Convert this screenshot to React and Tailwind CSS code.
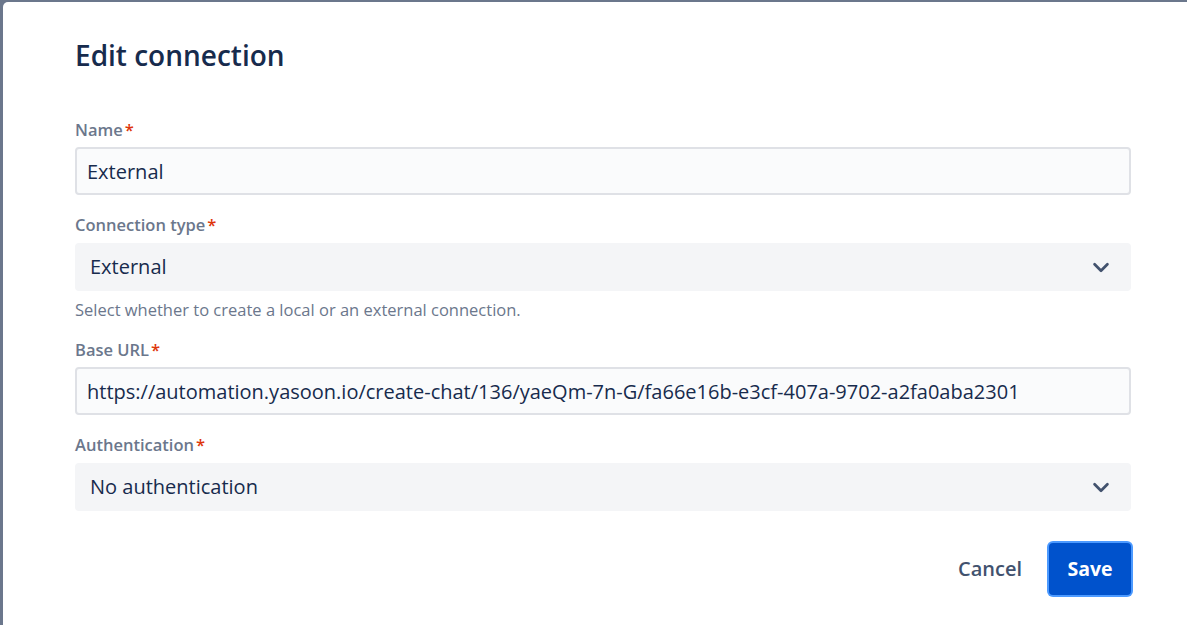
const font = { fontFamily: '"Open Sans", "Noto Sans", sans-serif' };

const Label = ({ children }) => (
  <div className="flex items-center text-[16.5px] font-semibold text-[#6b778c] h-[20px]">
    {children}
    <span className="text-[#de350b] ml-[2px]">*</span>
  </div>
);

const TextInput = ({ value }) => (
  <div className="mt-[7px] h-[48px] border-2 border-[#dfe1e6] bg-[#fafbfc] rounded-[4px] flex items-center px-[10px] pt-[1px] text-[20px] text-[#172b4d] whitespace-nowrap overflow-hidden">
    {value}
  </div>
);

const Select = ({ value }) => (
  <div className="mt-[8px] h-[48px] bg-[#f4f5f7] rounded-[4px] flex items-center justify-between pl-[15px] pr-[19px] text-[20px] text-[#172b4d]">
    <span>{value}</span>
    <svg width="22" height="22" viewBox="0 0 24 24">
      <path d="M5 9l7 7 7-7" fill="none" stroke="#42526e" strokeWidth="3" strokeLinecap="round" strokeLinejoin="round" />
    </svg>
  </div>
);

export default function App() {
  return (
    <div className="h-[625px] w-[1187px] bg-[#6b778c] overflow-hidden pt-[2px] pl-[3px]" style={font}>
      <div className="h-full bg-white rounded-tl-[5px] pl-[72px] pr-[56px] pt-[35px]">
        <h1 className="text-[28px] font-semibold text-[#172b4d] leading-[36px]">Edit connection</h1>

        <div className="mt-[47px]">
          <Label>Name</Label>
          <TextInput value="External" />
        </div>

        <div className="mt-[20px]">
          <Label>Connection type</Label>
          <Select value="External" />
          <div className="mt-[9px] text-[16.5px] text-[#6b778c] leading-[20px]">
            Select whether to create a local or an external connection.
          </div>
        </div>

        <div className="mt-[20px]">
          <Label>Base URL</Label>
          <TextInput value="https://automation.yasoon.io/create-chat/136/yaeQm-7n-G/fa66e16b-e3cf-407a-9702-a2fa0aba2301" />
        </div>

        <div className="mt-[20px]">
          <Label>Authentication</Label>
          <Select value="No authentication" />
        </div>

        <div className="mt-[31px] flex justify-end items-center gap-[9px]">
          <button className="h-[53px] px-[18px] text-[20px] font-semibold text-[#42526e]">Cancel</button>
          <button className="h-[52px] w-[82px] rounded-[4px] ring-[2px] ring-[#4c9aff] bg-[#0052cc] text-[19.5px] font-bold text-white">
            Save
          </button>
        </div>
      </div>
    </div>
  );
}
